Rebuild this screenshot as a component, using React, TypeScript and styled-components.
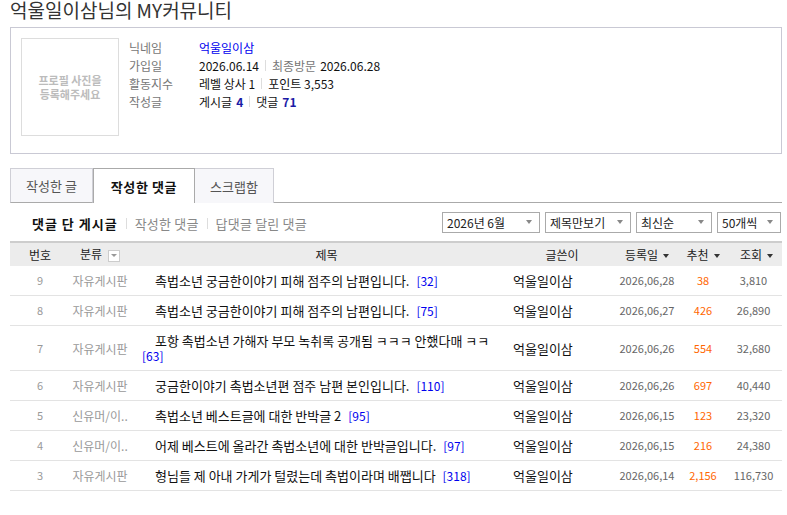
import React from 'react'
import styled, { createGlobalStyle } from 'styled-components'

const Colors = {
  Text: '#222',
  Gray: '#777',
  Light: '#999',
  Line: '#e3e3e3',
  Box: '#c9c9d4',
  Blue: '#0000ee',
  Navy: '#1a1aa6',
  Orange: '#ff6600',
}

const GlobalStyle = createGlobalStyle`
  body {
    margin: 0;
    background: #fff;
    font-family: 'Noto Sans CJK KR', 'Noto Sans', sans-serif;
    color: ${Colors.Text};
  }
`

const posts = [
  { no: 9, cat: '자유게시판', title: '촉법소년 궁금한이야기 피해 점주의 남편입니다.', cnt: 32, date: '2026,06,28', rec: '38', view: '3,810' },
  { no: 8, cat: '자유게시판', title: '촉법소년 궁금한이야기 피해 점주의 남편입니다.', cnt: 75, date: '2026,06,27', rec: '426', view: '26,890' },
  { no: 7, cat: '자유게시판', title: '포항 촉법소년 가해자 부모 녹취록 공개됨 ㅋㅋㅋ 안했다매 ㅋㅋ', cnt: 63, date: '2026,06,26', rec: '554', view: '32,680' },
  { no: 6, cat: '자유게시판', title: '궁금한이야기 촉법소년편 점주 남편 본인입니다.', cnt: 110, date: '2026,06,26', rec: '697', view: '40,440' },
  { no: 5, cat: '신유머/이..', title: '촉법소년 베스트글에 대한 반박글 2', cnt: 95, date: '2026,06,15', rec: '123', view: '23,320' },
  { no: 4, cat: '신유머/이..', title: '어제 베스트에 올라간 촉법소년에 대한 반박글입니다.', cnt: 97, date: '2026,06,15', rec: '216', view: '24,380' },
  { no: 3, cat: '자유게시판', title: '형님들 제 아내 가게가 털렸는데 촉법이라며 배쨉니다', cnt: 318, date: '2026,06,14', rec: '2,156', view: '116,730' },
]

const Page = styled.div`
  width: 772px;
  padding-left: 10px;
`

const Title = styled.h1`
  margin: 0 0 8px;
  font-size: 19px;
  line-height: 19px;
  font-weight: normal;
  color: #333;
  white-space: nowrap;
`

const ProfileBox = styled.section`
  display: flex;
  gap: 10px;
  height: 105px;
  padding: 10px;
  border: 1px solid ${Colors.Box};
`

const Photo = styled.div`
  width: 96px;
  height: 96px;
  border: 1px solid #ddd;
  display: flex;
  align-items: center;
  justify-content: center;
  text-align: center;
  font-size: 11px;
  line-height: 14px;
  font-weight: bold;
  color: #bcbcbc;
`

const Info = styled.dl`
  margin: 0;
  display: grid;
  grid-template-columns: 70px auto;
  grid-auto-rows: 18px;
  align-items: center;
  align-content: start;
  font-size: 12px;
`

const Label = styled.dt`
  color: ${Colors.Gray};
`

const Value = styled.dd`
  margin: 0;
  color: #111;
  display: flex;
  align-items: center;
`

const Sep = styled.span`
  width: 1px;
  height: 11px;
  background: #ddd;
  margin: 0 6px;
`

const Muted = styled.span`
  color: ${Colors.Gray};
  margin-right: 4px;
`

const Nick = styled.span`
  color: ${Colors.Blue};
`

const Num = styled.b`
  color: ${Colors.Navy};
  margin-left: 4px;
`

const TabBar = styled.nav`
  display: flex;
  margin-top: 14px;
  border-bottom: 1px solid #aaa;
`

const Tab = styled.div<{ $active?: boolean; $w: number }>`
  position: relative;
  z-index: ${p => (p.$active ? 1 : 0)};
  width: ${p => p.$w}px;
  height: 35px;
  box-sizing: border-box;
  margin-bottom: -1px;
  margin-left: ${p => (p.$active ? '0' : '-1px')};
  display: flex;
  align-items: center;
  justify-content: center;
  font-size: 13px;
  border: 1px solid ${p => (p.$active ? '#aaa' : '#cfcfd6')};
  border-bottom: none;
  background: ${p => (p.$active ? '#fff' : '#f7f7fa')};
  color: ${p => (p.$active ? '#111' : '#555')};
  font-weight: ${p => (p.$active ? 'bold' : 'normal')};
  letter-spacing: ${p => (p.$active ? '0.6px' : '0')};
  &:first-child {
    margin-left: 0;
    border-bottom: 1px solid #aaa;
  }
`

const SubBar = styled.div`
  display: flex;
  align-items: center;
  justify-content: space-between;
  height: 38px;
  box-sizing: border-box;
`

const SubNav = styled.div`
  display: flex;
  align-items: center;
  padding: 2px 0 0 22px;
  font-size: 13px;
`

const SubLink = styled.span<{ $active?: boolean }>`
  color: ${p => (p.$active ? '#111' : '#888')};
  font-weight: ${p => (p.$active ? 'bold' : 'normal')};
  letter-spacing: ${p => (p.$active ? '1px' : '0.2px')};
`

const SubSep = styled.span`
  width: 1px;
  height: 11px;
  background: #ddd;
  margin: 0 8px;
`

const Selects = styled.div`
  display: flex;
  gap: 5px;
  padding-right: 1px;
`

const Select = styled.div<{ $w: number }>`
  width: ${p => p.$w}px;
  height: 21px;
  box-sizing: border-box;
  border: 1px solid #aaa;
  display: flex;
  align-items: center;
  justify-content: space-between;
  padding: 0 7px 0 4px;
  font-size: 12px;
  color: #222;
`

const Arrow = styled.i<{ $color?: string }>`
  display: inline-block;
  width: 0;
  height: 0;
  border-left: 3.5px solid transparent;
  border-right: 3.5px solid transparent;
  border-top: 4px solid ${p => p.$color || '#888'};
`

const Table = styled.table`
  width: 772px;
  table-layout: fixed;
  border-collapse: collapse;
`

const Th = styled.th<{ $pl?: number }>`
  height: 23px;
  padding: 0 0 0 ${p => p.$pl || 0}px;
  background: #ececec;
  border-top: 2px solid #cdcdcd;
  font-size: 12px;
  line-height: 14px;
  font-weight: normal;
  color: #222;
  white-space: nowrap;
  & > ${Arrow} {
    margin-left: 5px;
    vertical-align: middle;
  }
`

const FilterBox = styled.span`
  display: inline-flex;
  align-items: center;
  justify-content: center;
  width: 12px;
  height: 12px;
  box-sizing: border-box;
  margin-left: 6px;
  vertical-align: middle;
  border: 1px solid #ccc;
  background: #fff;
  & > ${Arrow} {
    border-left-width: 3px;
    border-right-width: 3px;
    border-top-width: 3px;
  }
`

const Row = styled.tr`
  border-bottom: 1px solid ${Colors.Line};
`

type Kind = 'no' | 'cat' | 'title' | 'author' | 'date' | 'rec' | 'view'

const big = (k: Kind) => k === 'title' || k === 'author'

const Td = styled.td<{ $kind: Kind }>`
  padding: 7px 0;
  line-height: 15px;
  vertical-align: middle;
  overflow: hidden;
  text-align: ${p => (big(p.$kind) ? 'left' : 'center')};
  font-size: ${p => (big(p.$kind) ? '13px' : p.$kind === 'cat' ? '12px' : '11px')};
  color: ${p =>
    big(p.$kind)
      ? '#111'
      : p.$kind === 'rec'
      ? Colors.Orange
      : p.$kind === 'date' || p.$kind === 'view'
      ? '#666'
      : Colors.Light};
  padding-left: ${p => (p.$kind === 'title' ? '12px' : p.$kind === 'author' ? '8px' : '0')};
  padding-right: ${p => (p.$kind === 'title' ? '4px' : p.$kind === 'view' ? '6px' : '0')};
  text-indent: ${p => (p.$kind === 'title' ? '13px' : '0')};
  white-space: ${p => (p.$kind === 'cat' ? 'nowrap' : 'normal')};
`

const TitleText = styled.span`
  padding-right: 4px;
`

const CommentCount = styled.span`
  color: ${Colors.Blue};
  font-size: 12px;
  line-height: 12px;
`

export default function App() {
  return (
    <Page>
      <GlobalStyle />
      <Title>억울일이삼님의 MY커뮤니티</Title>

      <ProfileBox>
        <Photo>
          프로필 사진을
          <br />
          등록해주세요
        </Photo>
        <Info>
          <Label>닉네임</Label>
          <Value>
            <Nick>억울일이삼</Nick>
          </Value>
          <Label>가입일</Label>
          <Value>
            2026.06.14
            <Sep />
            <Muted>최종방문</Muted>2026.06.28
          </Value>
          <Label>활동지수</Label>
          <Value>
            레벨 상사 1<Sep />
            포인트 3,553
          </Value>
          <Label>작성글</Label>
          <Value>
            게시글<Num>4</Num>
            <Sep />
            댓글<Num>71</Num>
          </Value>
        </Info>
      </ProfileBox>

      <TabBar>
        <Tab $w={83}>작성한 글</Tab>
        <Tab $w={102} $active>
          작성한 댓글
        </Tab>
        <Tab $w={80}>스크랩함</Tab>
      </TabBar>

      <SubBar>
        <SubNav>
          <SubLink $active>댓글 단 게시글</SubLink>
          <SubSep />
          <SubLink>작성한 댓글</SubLink>
          <SubSep />
          <SubLink>답댓글 달린 댓글</SubLink>
        </SubNav>
        <Selects>
          <Select $w={98}>
            2026년 6월 <Arrow />
          </Select>
          <Select $w={86}>
            제목만보기 <Arrow />
          </Select>
          <Select $w={76}>
            최신순 <Arrow />
          </Select>
          <Select $w={64}>
            50개씩 <Arrow />
          </Select>
        </Selects>
      </SubBar>

      <Table>
        <colgroup>
          <col style={{ width: 60 }} />
          <col style={{ width: 60 }} />
          <col style={{ width: 375 }} />
          <col style={{ width: 114 }} />
          <col style={{ width: 56 }} />
          <col style={{ width: 56 }} />
          <col style={{ width: 51 }} />
        </colgroup>
        <thead>
          <tr>
            <Th>번호</Th>
            <Th>
              분류
              <FilterBox>
                <Arrow $color="#999" />
              </FilterBox>
            </Th>
            <Th $pl={18}>제목</Th>
            <Th>글쓴이</Th>
            <Th>
              등록일
              <Arrow $color="#333" />
            </Th>
            <Th>
              추천
              <Arrow $color="#333" />
            </Th>
            <Th>
              조회
              <Arrow $color="#333" />
            </Th>
          </tr>
        </thead>
        <tbody>
          {posts.map(p => (
            <Row key={p.no}>
              <Td $kind="no">{p.no}</Td>
              <Td $kind="cat">{p.cat}</Td>
              <Td $kind="title">
                <TitleText>{p.title}</TitleText> <CommentCount>[{p.cnt}]</CommentCount>
              </Td>
              <Td $kind="author">억울일이삼</Td>
              <Td $kind="date">{p.date}</Td>
              <Td $kind="rec">{p.rec}</Td>
              <Td $kind="view">{p.view}</Td>
            </Row>
          ))}
        </tbody>
      </Table>
    </Page>
  )
}
